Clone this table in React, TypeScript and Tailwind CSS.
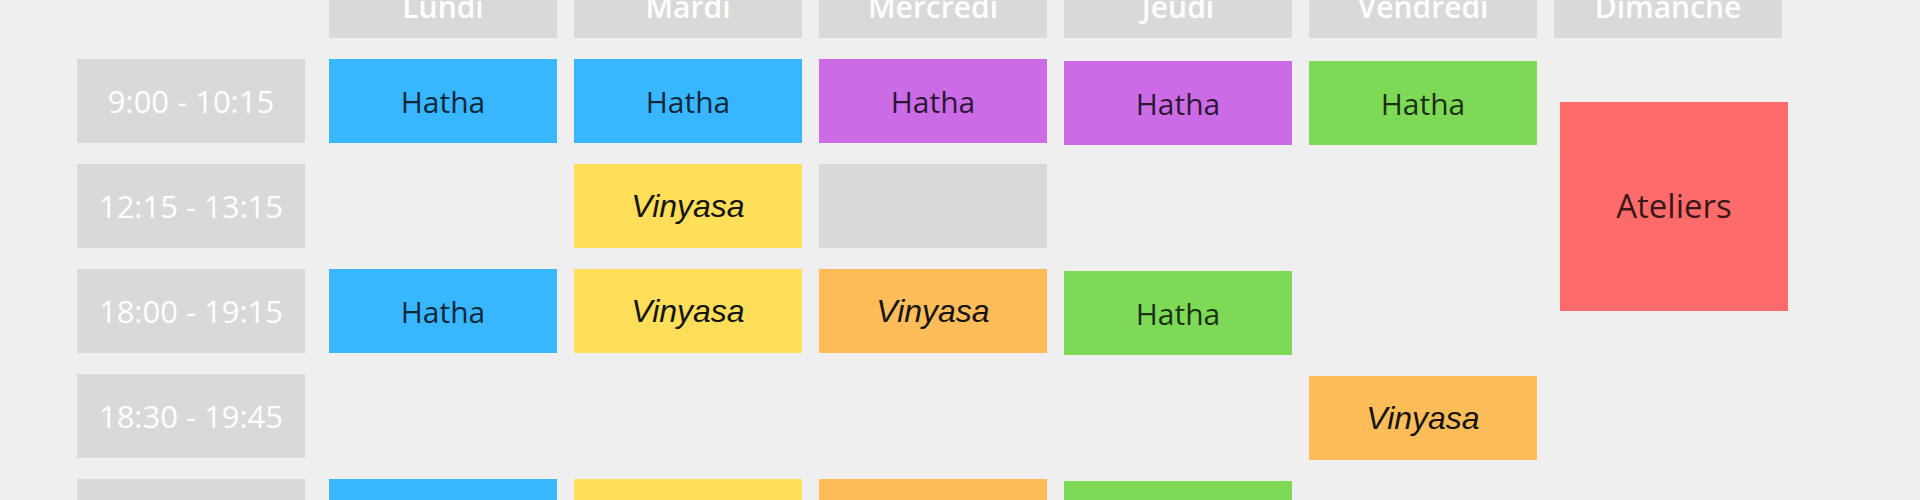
const days = ['Lundi', 'Mardi', 'Mercredi', 'Jeudi', 'Vendredi', 'Dimanche'];

type Slot = {
  label?: string;
  tone: 'blue' | 'purple' | 'green' | 'yellow' | 'orange' | 'gray' | 'none';
  shift?: boolean;
};

const tones: Record<Slot['tone'], string> = {
  blue: 'bg-[#38b6ff]',
  purple: 'bg-[#cb6ce6]',
  green: 'bg-[#7ed957]',
  yellow: 'bg-[#ffde59]',
  orange: 'bg-[#ffbd59]',
  gray: 'bg-[#d9d9d9]',
  none: '',
};

const rows: { time: string; slots: Slot[] }[] = [
  {
    time: '9:00 - 10:15',
    slots: [
      { label: 'Hatha', tone: 'blue' },
      { label: 'Hatha', tone: 'blue' },
      { label: 'Hatha', tone: 'purple' },
      { label: 'Hatha', tone: 'purple', shift: true },
      { label: 'Hatha', tone: 'green', shift: true },
    ],
  },
  {
    time: '12:15 - 13:15',
    slots: [
      { tone: 'none' },
      { label: 'Vinyasa', tone: 'yellow' },
      { tone: 'gray' },
      { tone: 'none' },
      { tone: 'none' },
    ],
  },
  {
    time: '18:00 - 19:15',
    slots: [
      { label: 'Hatha', tone: 'blue' },
      { label: 'Vinyasa', tone: 'yellow' },
      { label: 'Vinyasa', tone: 'orange' },
      { label: 'Hatha', tone: 'green', shift: true },
      { tone: 'none' },
    ],
  },
  {
    time: '18:30 - 19:45',
    slots: [
      { tone: 'none' },
      { tone: 'none' },
      { tone: 'none' },
      { tone: 'none' },
      { label: 'Vinyasa', tone: 'orange', shift: true },
    ],
  },
  {
    time: '19:30 - 20:45',
    slots: [
      { label: 'Hatha', tone: 'blue' },
      { label: 'Vinyasa', tone: 'yellow' },
      { label: 'Vinyasa', tone: 'orange' },
      { label: 'Hatha', tone: 'green', shift: true },
      { tone: 'none' },
    ],
  },
];

function Cell({ slot }: { slot: Slot }) {
  if (slot.tone === 'none') return <div />;
  const italic = slot.label === 'Vinyasa';
  return (
    <div
      className={`${tones[slot.tone]} ${slot.shift ? 'mt-[2px] -mb-[2px]' : ''} flex items-center justify-center`}
    >
      {slot.label &&
        (italic ? (
          <span className="font-['Liberation_Sans',Arial,sans-serif] italic text-[32px] text-[#141414]">
            {slot.label}
          </span>
        ) : (
          <span className="font-['Open_Sans',sans-serif] font-medium text-[30px] text-black/80">
            {slot.label}
          </span>
        ))}
    </div>
  );
}

export default function App() {
  return (
    <div className="w-[1920px] h-[500px] overflow-hidden bg-[#efefef]">
      <div className="-mt-[26px] pl-[77px] grid grid-cols-[235px_repeat(6,228px)] grid-rows-[64px_repeat(5,84px)] gap-x-[17px] gap-y-[21px]">
        <div />
        {days.map((d) => (
          <div
            key={d}
            className="bg-[#d9d9d9] flex items-center justify-center font-['Open_Sans',sans-serif] font-semibold text-[30px] text-white"
          >
            {d}
          </div>
        ))}

        {rows.map((row, i) => (
          <>
            <div
              key={row.time}
              className="w-[228px] bg-[#d9d9d9] flex items-center justify-center font-['Open_Sans',sans-serif] text-[31px] text-white"
              style={{ gridRow: i + 2, gridColumn: 1 }}
            >
              {row.time}
            </div>
            {row.slots.map((slot, j) => (
              <div key={`${i}-${j}`} className="grid" style={{ gridRow: i + 2, gridColumn: j + 2 }}>
                <Cell slot={slot} />
              </div>
            ))}
          </>
        ))}

        <div className="col-start-7 row-start-2 row-span-3 flex items-center">
          <div className="ml-[6px] shrink-0 w-[228px] h-[209px] bg-[#ff6b6b] flex items-center justify-center font-['Open_Sans',sans-serif] font-medium text-[33px] text-black/80">
            Ateliers
          </div>
        </div>
      </div>
    </div>
  );
}
